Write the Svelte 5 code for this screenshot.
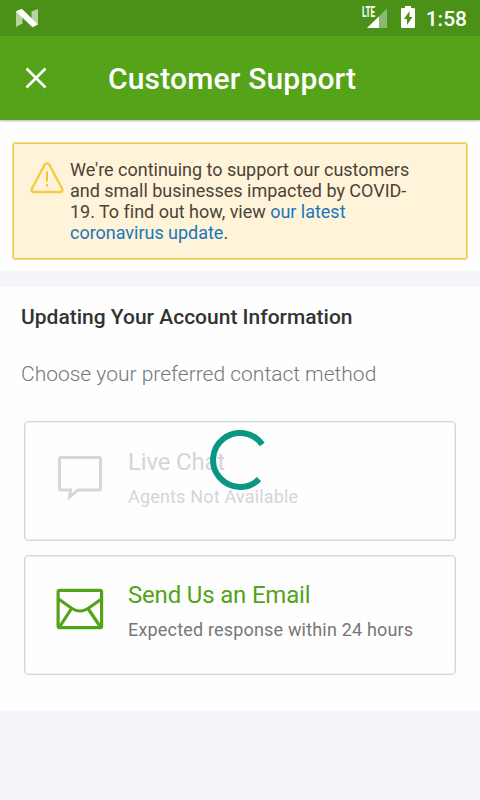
<script>
  const time = '1:58';
</script>

<div class="screen">
  <div class="status">
    <svg class="android" width="22" height="19" viewBox="0 0 22 19" aria-hidden="true">
      <path d="M0 2.2 6.500 5v9.500L0 18zM15.500 2.500 22 0v15.500L15.500 13z" fill="#b7d49b" />
      <path d="M0 2.500Q3 0 6 0L22 15.500 16.500 18.200z" fill="#fff" />
    </svg>
    <div class="indicators">
      <div class="signal">
        <svg width="27" height="22" viewBox="0 0 27 22" aria-hidden="true">
          <path d="M26 1.500V21H6z" fill="#8cb970" />
          <path d="M18 9.500V21H6z" fill="#fff" />
        </svg>
        <span class="lte">LTE</span>
      </div>
      <svg class="battery" width="14" height="22" viewBox="0 0 14 22" aria-hidden="true">
        <path fill-rule="evenodd" fill="#fff" d="M4 0h6v2h2.700Q14 2 14 3.300v17.400Q14 22 12.700 22H1.300Q0 22 0 20.700V3.300Q0 2 1.300 2H4zM8.500 5 3 13h3v6l5.500-8H8.500z" />
      </svg>
      <span class="time">{time}</span>
    </div>
  </div>

  <header>
    <button aria-label="Close">
      <svg width="22" height="22" viewBox="0 0 22 22">
        <path d="M1.500 1.500l19 19M20.500 1.500l-19 19" stroke="#fff" stroke-width="2.600" fill="none" />
      </svg>
    </button>
    <h1>Customer Support</h1>
  </header>

  <div class="notice-area">
    <div class="notice">
      <svg width="34" height="32" viewBox="0 0 34 32" aria-hidden="true">
        <path d="M14.700 2.700Q17 0 19.300 2.700L32 26.500Q33.300 30 30 30H4Q.7 30 2 26.500z" fill="none" stroke="#f6cc45" stroke-width="2.500" stroke-linejoin="round" />
        <path d="M17 9.500v10M17 22v2.500" fill="none" stroke="#f2c52d" stroke-width="2" />
      </svg>
      <p>We're continuing to support our customers<br />and small businesses impacted by COVID-<br />19. To find out how, view <a href="#update">our latest<br />coronavirus update</a>.</p>
    </div>
  </div>

  <main>
    <h2>Updating Your Account Information</h2>
    <p class="prompt">Choose your preferred contact method</p>

    <div class="card disabled">
      <svg width="48" height="48" viewBox="0 0 48 48" aria-hidden="true">
        <path d="M5 4.500h38q1.500 0 1.500 1.500v29.500q0 1.500-1.500 1.500H22l-8.500 7 1-7H5q-1.500 0-1.500-1.500V6Q3.500 4.500 5 4.500z" fill="none" stroke="#d4d7dc" stroke-width="3" />
      </svg>
      <div class="words">
        <h3 class="chat">Live Chat</h3>
        <p class="agents">Agents Not Available</p>
      </div>
      <svg class="spinner" width="60" height="60" viewBox="0 0 60 60" aria-hidden="true">
        <path d="M52.200 14.500A27 27 0 1 0 49.100 49.100" fill="none" stroke="#079783" stroke-width="6" />
      </svg>
    </div>

    <div class="card">
      <svg width="48" height="48" viewBox="0 0 48 48" aria-hidden="true">
        <g fill="none" stroke="#53a318" stroke-width="3.200" stroke-linejoin="round">
          <rect x="2.100" y="5.400" width="43.500" height="37.300" rx="1.500" />
          <path d="M2.500 14 16 23.500q8 5 16 0l13.500-9.500M15.500 23.500 3.500 42M32 23.500l12.500 18.500" />
        </g>
      </svg>
      <div class="words">
        <h3 class="email">Send Us an Email</h3>
        <p class="response">Expected response within 24 hours</p>
      </div>
    </div>
  </main>
</div>

<style>
  :global(body) { margin: 0; background: #f4f5f8; }
  * { box-sizing: border-box; }
  h1, h2, h3, p { margin: 0; font-weight: 400; white-space: nowrap; }
  svg { display: block; flex: none; }
  .screen { width: 480px; height: 800px; overflow: hidden; background: #f4f5f8; font-family: Roboto, sans-serif; }
  .status { height: 36px; padding: 0 13px 0 16px; display: flex; justify-content: space-between; align-items: center; background: #4b9118; color: #fff; }
  .indicators { display: flex; align-items: center; }
  .signal { position: relative; margin-right: 13px; }
  .lte { position: absolute; left: 1px; top: -1px; font-size: 14px; line-height: 13px; font-weight: 700; transform: scaleX(.58); transform-origin: left; }
  .battery { margin: -2px 11px 0 0; }
  .time { font-size: 21px; font-weight: 500; line-height: 36px; padding-top: 2px; }
  header { position: relative; height: 84px; padding-left: 25px; display: flex; align-items: center; background: #54a319; color: #fff; box-shadow: 0 1px 2px rgba(0, 0, 0, .3); }
  button { padding: 0; border: 0; background: none; }
  h1 { margin-left: 61px; font-size: 30px; line-height: 40px; font-weight: 500; letter-spacing: .17px; padding-top: 2px; }
  .notice-area { height: 151px; padding: 22px 12px 0; background: #fefefe; }
  .notice { height: 118px; display: flex; gap: 6px; padding: 16px 0 0 18px; border: 1px solid #f3da85; box-shadow: inset 0 0 0 1px #efc944; border-radius: 3px; background: #fff3da; }
  .notice svg { margin: 3px 0 0 -1px; }
  .notice p { font-size: 18px; line-height: 21px; letter-spacing: -.02px; color: #4b4337; }
  a { color: #1977b9; text-decoration: none; }
  main { height: 424px; margin-top: 16px; padding: 17px 24px 0; background: #fefefe; }
  h2 { margin-left: -3px; font-size: 21px; line-height: 26px; font-weight: 500; color: #333; }
  .prompt { margin: 30px 0 0 -3px; font-size: 21px; line-height: 28px; font-weight: 300; color: #777; }
  .card { position: relative; height: 120px; margin-top: 14px; display: flex; border: 1px solid #d5d6d8; box-shadow: inset 0 0 0 1px #eeeef0; border-radius: 4px; padding: 25px 0 0 31px; }
  .disabled { margin-top: 33px; padding-top: 26px; }
  .card > svg:first-child { margin-top: 4px; }
  .disabled > svg:first-child { margin-top: 5px; }
  .words { margin-left: 24px; }
  h3 { font-size: 24px; line-height: 28px; letter-spacing: -.18px; }
  .words p { margin-top: 9px; font-size: 18px; line-height: 24px; letter-spacing: .18px; color: #777; }
  .words .email { color: #53a318; }
  .disabled .words h3, .disabled .words p { color: #d4d5d9; }
  .card > .spinner { position: absolute; left: 185px; top: 8px; }
</style>
